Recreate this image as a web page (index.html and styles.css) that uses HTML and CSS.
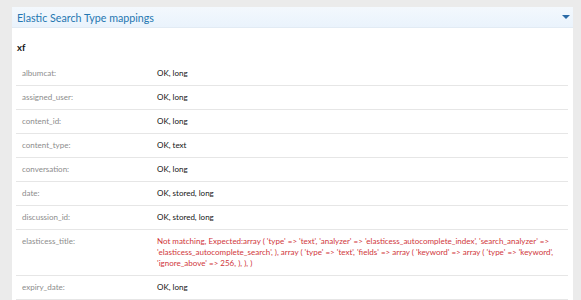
FILE: index.html
```html
<!DOCTYPE html>
<html lang="en">
<head>
    <meta charset="UTF-8">
    <title>Elastic Search Type mappings</title>
    <link rel="stylesheet" href="styles.css">
</head>
<body>
    <div class="block">
        <div class="block-header">
            <span>Elastic Search Type mappings</span>
            <span class="toggle"></span>
        </div>
        <div class="block-body">
            <h3 class="group">xf</h3>
            <dl class="row"><dt>albumcat:</dt><dd>OK, long</dd></dl>
            <dl class="row"><dt>assigned_user:</dt><dd>OK, long</dd></dl>
            <dl class="row"><dt>content_id:</dt><dd>OK, long</dd></dl>
            <dl class="row"><dt>content_type:</dt><dd>OK, text</dd></dl>
            <dl class="row"><dt>conversation:</dt><dd>OK, long</dd></dl>
            <dl class="row"><dt>date:</dt><dd>OK, stored, long</dd></dl>
            <dl class="row"><dt>discussion_id:</dt><dd>OK, stored, long</dd></dl>
            <dl class="row"><dt>elasticess_title:</dt><dd class="error">Not matching, Expected:array ( 'type' =&gt; 'text', 'analyzer' =&gt; 'elasticess_autocomplete_index', 'search_analyzer' =&gt; 'elasticess_autocomplete_search', ), array ( 'type' =&gt; 'text', 'fields' =&gt; array ( 'keyword' =&gt; array ( 'type' =&gt; 'keyword', 'ignore_above' =&gt; 256, ), ), )</dd></dl>
            <dl class="row"><dt>expiry_date:</dt><dd>OK, long</dd></dl>
        </div>
    </div>
</body>
</html>
```

FILE: styles.css
```css
body {
    margin: 0;
    padding: 7px 8px 0 12px;
    background-color: #ebebeb;
    font-family: Lato, "Noto Sans", sans-serif;
    overflow: hidden;
}

.block {
    width: 561px;
    background-color: #fff;
}

.block-header {
    display: flex;
    justify-content: space-between;
    align-items: center;
    height: 20px;
    padding: 0 5px;
    background: linear-gradient(#f3f8fd, #eaf3fc);
    border-bottom: 1px solid #e2ebf4;
    color: #2577b1;
    font-size: 10.7px;
}

.toggle {
    width: 0;
    height: 0;
    border-left: 4px solid transparent;
    border-right: 4px solid transparent;
    border-top: 4px solid #2b6aa6;
    margin-right: -2px;
}

.block-body {
    padding: 0 5px 0 4px;
}

.group {
    margin: 0;
    padding: 14px 1px 9px;
    font-size: 9.5px;
    font-weight: bold;
    color: #141414;
}

.row {
    display: flex;
    margin: 0;
    border-bottom: 1px solid #e6e6e6;
    font-size: 8px;
    line-height: 11px;
}

.row dt {
    flex: 0 0 135px;
    padding: 6px 0 6px 6px;
    color: #8c8c8c;
}

.row dd {
    flex: 1;
    margin: 0;
    padding: 6px 6px 6px 0;
    color: #141414;
}

.row .error {
    color: #d0363b;
}
```
